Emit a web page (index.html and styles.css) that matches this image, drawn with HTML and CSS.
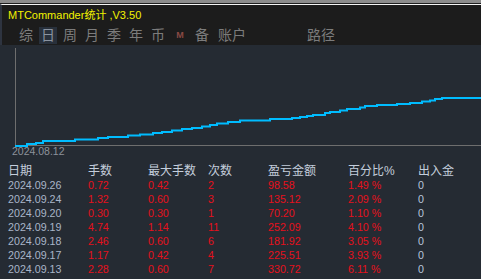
FILE: index.html
```html
<!DOCTYPE html>
<html lang="zh-cn">
<head>
    <meta charset="UTF-8">
    <title>MTCommander统计</title>
    <link rel="stylesheet" href="styles.css">
</head>
<body>
    <div class="top-strip"></div>
    <div class="window">
        <div class="title">MTCommander统计 ,V3.50</div>

        <nav class="tabs">
            <span class="tab">综</span>
            <span class="tab active">日</span>
            <span class="tab">周</span>
            <span class="tab">月</span>
            <span class="tab">季</span>
            <span class="tab">年</span>
            <span class="tab">币</span>
            <span class="tab tab-m">M</span>
            <span class="tab">备</span>
            <span class="tab tab-wide">账户</span>
            <span class="tab tab-path">路径</span>
        </nav>

        <div class="chart">
            <svg width="481" height="115" viewBox="0 0 481 115">
                <line x1="15.5" y1="3" x2="15.5" y2="101" class="axis"/>
                <line x1="15" y1="100.5" x2="481" y2="100.5" class="axis"/>
                <path class="curve" d="M15 101 H27 V99 H36 V98 H43 V96 H75 V94.5 H98 V93 H108 V92 H128 V90.5 H140 V89.5 H153 V88 H162 V87 H172 V85.5 H182 V84 H192 V83 H202 V81.5 H210 V80 H217 V78.5 H228 V77 H240 V75.5 H270 V74 H292 V73 H300 V72 H307 V71 H313 V70 H325 V68 H330 V67 H340 V65.5 H347 V64 H360 V62.5 H365 V61 H377 V60 H397 V59 H410 V58 H422 V56.5 H430 V55.5 H435 V54 H442 V53 H481"/>
                <text x="12" y="110" class="date-label">2024.08.12</text>
            </svg>
        </div>

        <table class="stats">
            <thead>
                <tr>
                    <th>日期</th>
                    <th>手数</th>
                    <th>最大手数</th>
                    <th>次数</th>
                    <th>盈亏金额</th>
                    <th>百分比%</th>
                    <th>出入金</th>
                </tr>
            </thead>
            <tbody id="rows">
                <!-- linhas geradas pelo script -->
            </tbody>
        </table>
    </div>

    <script>
        const dados = [
            ["2024.09.26", "0.72", "0.42", "2", "98.58", "1.49 %", "0"],
            ["2024.09.24", "1.32", "0.60", "3", "135.12", "2.09 %", "0"],
            ["2024.09.20", "0.30", "0.30", "1", "70.20", "1.10 %", "0"],
            ["2024.09.19", "4.74", "1.14", "11", "252.09", "4.10 %", "0"],
            ["2024.09.18", "2.46", "0.60", "6", "181.92", "3.05 %", "0"],
            ["2024.09.17", "1.17", "0.42", "4", "225.51", "3.93 %", "0"],
            ["2024.09.13", "2.28", "0.60", "7", "330.72", "6.11 %", "0"],
            ["2024.09.12", "0.90", "0.30", "2", "180.90", "1.90 %", "0"]
        ];

        const tbody = document.getElementById("rows");
        dados.forEach(linha => {
            const tr = document.createElement("tr");
            tr.innerHTML = `
                <td class="date">${linha[0]}</td>
                <td class="neg">${linha[1]}</td>
                <td class="neg">${linha[2]}</td>
                <td class="neg">${linha[3]}</td>
                <td class="neg">${linha[4]}</td>
                <td class="neg">${linha[5]}</td>
                <td class="flow">${linha[6]}</td>
            `;
            tbody.appendChild(tr);
        });
    </script>
</body>
</html>
```

FILE: styles.css
```css
/* Base */
body {
    margin: 0;
    width: 481px;
    height: 279px;
    overflow: hidden;
    background: #1c1c1c;
    font-family: "Liberation Sans", "Noto Sans CJK SC", sans-serif;
}

.top-strip {
    height: 3px;
    background: #8c8c8c;
    border-bottom: 1px solid #202020;
}

.window {
    border-top: 1px solid #f4f4f4;
    border-left: 2px solid #2e3440;
}

/* Titulo */
.title {
    height: 21px;
    line-height: 20px;
    padding-left: 6px;
    color: #f2f200;
    font-size: 11px;
    background: #1c1c1c;
}

/* Abas */
.tabs {
    display: flex;
    align-items: center;
    height: 19px;
    padding-left: 13px;
    background: #1c1c1c;
}

.tab {
    flex: none;
    width: 22px;
    height: 17px;
    line-height: 17px;
    text-align: center;
    color: #7c7c7c;
    font-size: 14px;
}

.tab.active {
    width: 18px;
    margin: 0 2px;
    background: #28303b;
    color: #8a93a0;
}

.tab-m {
    font-size: 9px;
    font-weight: bold;
    color: #8a4a44;
}

.tab-wide {
    width: 30px;
    margin-left: 4px;
}

.tab-path {
    width: 30px;
    margin-left: 59px;
}

/* Grafico */
.chart {
    height: 115px;
    margin-left: -2px;
    background: #252b33;
}

.chart svg {
    display: block;
}

.axis {
    stroke: #6e6e6e;
    stroke-width: 1;
}

.curve {
    fill: none;
    stroke: #00bcff;
    stroke-width: 2;
}

.date-label {
    fill: #8d929b;
    font-size: 10.5px;
    font-family: "Liberation Sans", sans-serif;
}

/* Tabela */
.stats {
    width: 481px;
    margin-left: -2px;
    border-collapse: collapse;
    table-layout: fixed;
    background: #252b33;
    font-size: 10.7px;
}

.stats th, .stats td {
    padding: 0;
    text-align: left;
    white-space: nowrap;
}

.stats th {
    height: 16px;
    padding-top: 1px;
    font-size: 12px;
    font-weight: normal;
    color: #c4cedc;
}

.stats td {
    height: 14px;
    line-height: 14px;
}

.stats th:nth-child(1), .stats td:nth-child(1) { width: 80px; padding-left: 8px; }
.stats th:nth-child(2), .stats td:nth-child(2) { width: 60px; }
.stats th:nth-child(3), .stats td:nth-child(3) { width: 60px; }
.stats th:nth-child(4), .stats td:nth-child(4) { width: 60px; }
.stats th:nth-child(5), .stats td:nth-child(5) { width: 80px; }
.stats th:nth-child(6), .stats td:nth-child(6) { width: 70px; }

.date {
    color: #a9b5c9;
}

.neg {
    color: #e5101c;
}

.flow {
    color: #b8c6dc;
}
```
